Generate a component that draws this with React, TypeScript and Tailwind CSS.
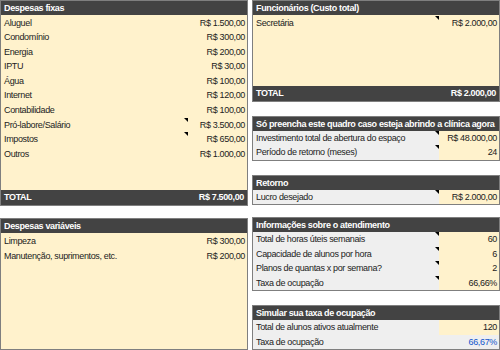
const font = "font-['Liberation_Sans',Arial,sans-serif]"

interface Row {
  label: string
  value: string
  note?: boolean
  blue?: boolean
}

const Note = () => (
  <span className="absolute right-0 top-0 w-0 h-0 border-t-[4px] border-l-[4px] border-t-black border-l-transparent" />
)

const Header = ({ title }: { title: string }) => (
  <div className="h-[14px] bg-[#434343] text-white font-bold leading-[14px] px-[3px] whitespace-nowrap overflow-hidden">
    {title}
  </div>
)

const CreamRow = ({ row, labelW }: { row: Row; labelW: string }) => (
  <div className="flex h-[14.6px] leading-[14.6px]">
    <div className={`relative ${labelW} px-[3px] whitespace-nowrap`}>
      {row.label}
      {row.note && <Note />}
    </div>
    <div className="flex-1 text-right px-[2px] whitespace-nowrap">{row.value}</div>
  </div>
)

const GrayRow = ({ row }: { row: Row }) => (
  <div className="flex h-[14.5px] leading-[14.5px]">
    <div className="relative w-[186px] bg-[#efefef] px-[3px] whitespace-nowrap">
      {row.label}
      {row.note && <Note />}
    </div>
    <div className={`flex-1 text-right px-[2px] whitespace-nowrap ${row.blue ? 'bg-[#efefef] text-[#1155cc]' : 'bg-[#fff2cc]'}`}>
      {row.value}
    </div>
  </div>
)

const TotalRow = ({ value }: { value: string }) => (
  <div className="flex h-[15px] leading-[15px] bg-[#434343] text-white font-bold px-[3px] justify-between">
    <span>TOTAL</span>
    <span>{value}</span>
  </div>
)

const fixas: Row[] = [
  { label: 'Aluguel', value: 'R$ 1.500,00' },
  { label: 'Condomínio', value: 'R$ 300,00' },
  { label: 'Energia', value: 'R$ 200,00' },
  { label: 'IPTU', value: 'R$ 30,00' },
  { label: 'Água', value: 'R$ 100,00' },
  { label: 'Internet', value: 'R$ 120,00' },
  { label: 'Contabilidade', value: 'R$ 100,00' },
  { label: 'Pró-labore/Salário', value: 'R$ 3.500,00', note: true },
  { label: 'Impostos', value: 'R$ 650,00', note: true },
  { label: 'Outros', value: 'R$ 1.000,00' },
]

const variaveis: Row[] = [
  { label: 'Limpeza', value: 'R$ 300,00' },
  { label: 'Manutenção, suprimentos, etc.', value: 'R$ 200,00' },
]

const abertura: Row[] = [
  { label: 'Investimento total de abertura do espaço', value: 'R$ 48.000,00', note: true },
  { label: 'Período de retorno (meses)', value: '24', note: true },
]

const atendimento: Row[] = [
  { label: 'Total de horas úteis semanais', value: '60', note: true },
  { label: 'Capacidade de alunos por hora', value: '6', note: true },
  { label: 'Planos de quantas x por semana?', value: '2', note: true },
  { label: 'Taxa de ocupação', value: '66,66%', note: true },
]

const simular: Row[] = [
  { label: 'Total de alunos ativos atualmente', value: '120' },
  { label: 'Taxa de ocupação', value: '66,67%', blue: true },
]

export default function App() {
  return (
    <div className={`${font} text-[9px] tracking-[-0.35px] text-[#222] bg-white w-[500px] h-[350px] overflow-hidden flex gap-[4px]`}>
      {/* left column */}
      <div className="w-[248px] shrink-0 flex flex-col">
        <div className="h-[206px] flex flex-col border border-[#7f7f7f] bg-[#fff2cc]">
          <Header title="Despesas fixas" />
          <div className="flex-1 pt-[0.5px]">
            {fixas.map((r) => (
              <CreamRow key={r.label} row={r} labelW="w-[187px]" />
            ))}
          </div>
          <TotalRow value="R$ 7.500,00" />
        </div>
        <div className="mt-[12px] flex-1 flex flex-col border border-[#7f7f7f] bg-[#fff2cc]">
          <Header title="Despesas variáveis" />
          <div className="flex-1 pt-[1px]">
            {variaveis.map((r) => (
              <CreamRow key={r.label} row={r} labelW="w-[187px]" />
            ))}
          </div>
        </div>
      </div>

      {/* right column */}
      <div className="w-[248px] min-w-0 shrink-0 flex flex-col">
        <div className="h-[103px] flex flex-col border border-[#7f7f7f] bg-[#fff2cc]">
          <Header title="Funcionários (Custo total)" />
          <div className="flex-1 pt-[0.5px]">
            <CreamRow row={{ label: 'Secretária', value: 'R$ 2.000,00', note: true }} labelW="w-[186px]" />
          </div>
          <TotalRow value="R$ 2.000,00" />
        </div>

        <div className="mt-[14px] border border-[#7f7f7f]">
          <Header title="Só preencha este quadro caso esteja abrindo a clínica agora" />
          {abertura.map((r) => (
            <GrayRow key={r.label} row={r} />
          ))}
        </div>

        <div className="mt-[14px] border border-[#7f7f7f]">
          <Header title="Retorno" />
          <GrayRow row={{ label: 'Lucro desejado', value: 'R$ 2.000,00', note: true }} />
        </div>

        <div className="mt-[12px] border border-[#7f7f7f]">
          <Header title="Informações sobre o atendimento" />
          {atendimento.map((r) => (
            <GrayRow key={r.label} row={r} />
          ))}
        </div>

        <div className="mt-[14px] border border-[#7f7f7f]">
          <Header title="Simular sua taxa de ocupação" />
          {simular.map((r) => (
            <GrayRow key={r.label} row={r} />
          ))}
        </div>
      </div>
    </div>
  )
}
